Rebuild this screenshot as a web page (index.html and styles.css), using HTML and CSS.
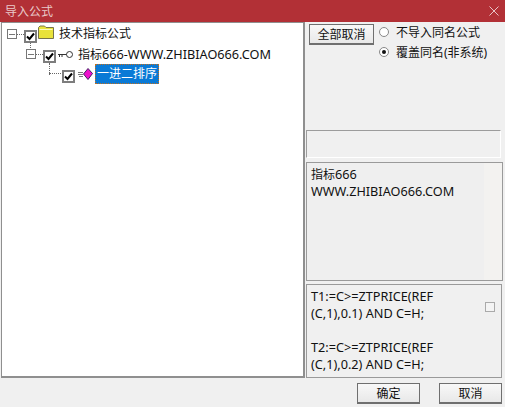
FILE: index.html
```html
<!DOCTYPE html>
<html lang="zh">
<head>
<meta charset="utf-8">
<title>导入公式</title>
<link rel="stylesheet" href="styles.css">
</head>
<body>
<div class="window">
  <header class="titlebar">
    <span class="title">导入公式</span>
    <svg class="close" width="10" height="10" viewBox="0 0 10 10"><path d="M0.5 0.5L9.5 9.5M9.5 0.5L0.5 9.5" stroke="#e8c4c6" stroke-width="1" fill="none"/></svg>
  </header>
  <main class="main">
    <section class="tree">
      <div class="row row-1">
        <span class="expander"></span><span class="dots"></span>
        <span class="check"><svg width="9" height="9" viewBox="0 0 9 9"><path d="M1 4.5L3.5 7L8 1.5" stroke="#000" stroke-width="2" fill="none"/></svg></span>
        <svg class="icon folder" width="16" height="14" viewBox="0 0 16 14"><path d="M0.5 13.5V2.5L2 1H6.5L8 2.5H15.5V13.5Z" fill="#e9e23a" stroke="#77734a"/><path d="M1.5 4.5H14.5" stroke="#fbf8c0"/></svg>
        <span class="label">技术指标公式</span>
      </div>
      <div class="row row-2">
        <span class="expander"></span><span class="dots"></span>
        <span class="check"><svg width="9" height="9" viewBox="0 0 9 9"><path d="M1 4.5L3.5 7L8 1.5" stroke="#000" stroke-width="2" fill="none"/></svg></span>
        <svg class="icon key" width="15" height="8" viewBox="0 0 15 8"><path d="M0 3.5H9M1.5 3.5V6M4 3.5V6" stroke="#333" fill="none"/><circle cx="11.5" cy="3.5" r="3" fill="#fff" stroke="#333"/></svg>
        <span class="label"><span>指标</span><span class="en">666-WWW.ZHIBIAO666.COM</span></span>
      </div>
      <div class="row row-3">
        <span class="check"><svg width="9" height="9" viewBox="0 0 9 9"><path d="M1 4.5L3.5 7L8 1.5" stroke="#000" stroke-width="2" fill="none"/></svg></span>
        <svg class="icon gem" width="15" height="12" viewBox="0 0 15 12"><path d="M0 4.5H5M0 6.5H5M1 8.5H5" stroke="#777" fill="none"/><path d="M10 .5L14.5 5.5L10 11.5L5.5 6Z" fill="#ee11cc" stroke="#442266"/></svg>
        <span class="label selected">一进二排序</span>
      </div>
    </section>
    <aside class="side">
      <div class="controls">
        <button class="btn btn-all">全部取消</button>
        <div class="radios">
          <div class="radio-row"><span class="radio"></span>不导入同名公式</div>
          <div class="radio-row"><span class="radio on"></span>覆盖同名(非系统)</div>
        </div>
      </div>
      <div class="blank"></div>
      <div class="desc"><span>指标</span><span class="en">666</span><br><span class="en">WWW.ZHIBIAO666.COM</span></div>
      <div class="code">
        <div class="code-text en">T1:=C&gt;=ZTPRICE(REF<br>(C,1),0.1) AND C=H;<br><br>T2:=C&gt;=ZTPRICE(REF<br>(C,1),0.2) AND C=H;</div>
        <span class="scrollbox"></span>
      </div>
    </aside>
  </main>
  <footer class="footer">
    <button class="btn btn-foot">确定</button>
    <button class="btn btn-foot">取消</button>
  </footer>
</div>
</body>
</html>
```
FILE: styles.css
```css
* { box-sizing: border-box; }
html, body { margin: 0; padding: 0; }
body {
  width: 505px;
  height: 407px;
  overflow: hidden;
  font-family: "Noto Sans", "Noto Sans CJK SC", sans-serif;
  font-size: 12px;
  color: #111;
  background: #f0f0f0;
}
.en { font-size: 12.7px; }
.window { display: flex; flex-direction: column; height: 407px; }
.titlebar {
  height: 22px;
  flex: none;
  background: #b23036;
  color: #e9c9ca;
  display: flex;
  align-items: center;
  justify-content: space-between;
  padding: 0 6px 1px 5px;
}
.title { font-size: 12px; }
.main { display: flex; height: 356px; flex: none; }
.tree {
  width: 304px;
  margin-left: 1px;
  flex: none;
  background: #fff;
  border: solid #8f8f8f;
  border-width: 1px 2px 2px 1px;
  position: relative;
  padding-top: 1px;
}
.row { height: 20px; display: flex; align-items: center; position: relative; }
.row-1 { padding-left: 5px; }
.row-2 { padding-left: 24px; }
.row-3 { padding-left: 60px; }
.expander {
  width: 10px; height: 10px; flex: none;
  border: 1px solid #777;
  background: linear-gradient(#777, #777) center / 6px 1px no-repeat #fff;
}
.dots { width: 7px; border-top: 1px dotted #666; flex: none; }
.check {
  width: 13px; height: 13px; flex: none;
  border: 2px solid #7d7d7d;
  background: #fff;
  display: flex; align-items: center; justify-content: center;
  margin-top: 5px;
  position: relative;
}
.row-1 .check::after {
  content: ""; position: absolute; left: 4px; top: 11px; height: 7px;
  border-left: 1px dotted #666;
}
.row-2 .check::after {
  content: ""; position: absolute; left: 4px; top: 11px; height: 12px;
  border-left: 1px dotted #666;
}
.row-2 .check::before {
  content: ""; position: absolute; left: 4px; top: 21px; width: 14px;
  border-top: 1px dotted #666;
}
.icon { flex: none; margin-left: 2px; }
.folder { margin-left: 1px; margin-top: -4px; }
.key { margin-top: 1px; }
.gem { margin-left: 3px; }
.label { margin-left: 5px; white-space: nowrap; line-height: 18px; }
.selected {
  margin-left: 2px;
  background: #0a7ad6;
  color: #fff;
  outline: 1px dotted #c07020;
  outline-offset: -1px;
  padding: 0 2px;
  height: 20px;
  line-height: 20px;
}
.side { flex: 1; position: relative; padding: 2px 0 0 1px; display: flex; flex-direction: column; min-width: 0; }
.controls { height: 106px; display: flex; align-items: flex-start; padding-left: 3px; gap: 5px; flex: none; }
.btn {
  font: inherit;
  color: #111;
  background: linear-gradient(#f8f8f8, #e8e8e8);
  border: 1px solid #6f6f6f;
  border-bottom-width: 2px;
  padding: 0;
  height: 21px;
}
.btn-all { width: 65px; flex: none; }
.radios { display: flex; flex-direction: column; gap: 4px; }
.radio-row { display: flex; align-items: center; height: 16px; gap: 7px; white-space: nowrap; }
.radio {
  width: 10px; height: 10px; border-radius: 50%; flex: none;
  background: #fff;
  border: 1px solid #888;
  position: relative;
}
.radio.on::after {
  content: ""; position: absolute; left: 2px; top: 2px; width: 4px; height: 4px;
  border-radius: 50%; background: #111;
}
.blank {
  width: 195px; height: 28px; flex: none;
  border: 1px solid #9c9c9c; border-bottom-color: #fff; border-right-color: #fff;
}
.desc {
  margin-top: 4px;
  height: 119px; flex: none; width: 197px;
  border: 1px solid #9a9a9a;
  padding: 3px 4px;
  line-height: 17px;
  background: linear-gradient(90deg, #efefef 177px, #f3f2f0 177px);
}
.code {
  margin-top: 3px;
  flex: 1; width: 196px;
  border: 1px solid #9a9a9a;
  padding: 3px 6px 0 4px;
  display: flex; justify-content: space-between;
  overflow: hidden;
}
.code-text { line-height: 17px; }
.scrollbox {
  width: 10px; height: 10px; border: 1px solid #aaa; background: #f4f4f4;
  margin-top: 14px; flex: none;
}
.footer {
  flex: 1;
  display: flex; justify-content: flex-end; gap: 19px;
  padding: 5px 3px 0 0;
}
.btn-foot { width: 63px; height: 21px; }
```
